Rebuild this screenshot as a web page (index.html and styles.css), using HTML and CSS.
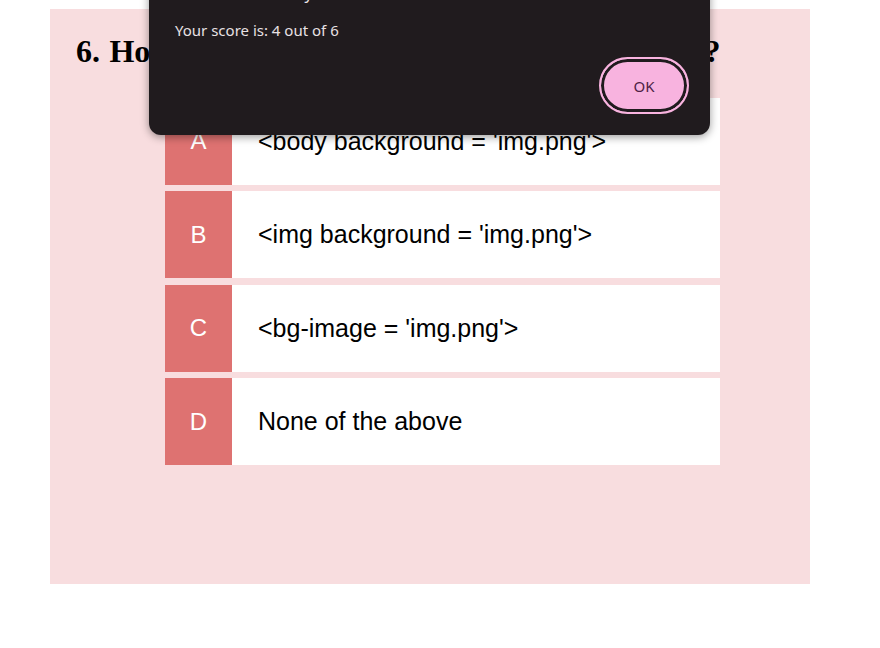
FILE: index.html
```html
<!DOCTYPE html>
<html>
<head>
<meta charset="utf-8">
<link rel="stylesheet" href="styles.css">
</head>
<body>
<div class="quiz">
  <h1 class="question">6. How to add a background image in HTML?</h1>
  <div class="options">
    <div class="option"><span class="letter">A</span><span class="text">&lt;body background = 'img.png'&gt;</span></div>
    <div class="option"><span class="letter">B</span><span class="text">&lt;img background = 'img.png'&gt;</span></div>
    <div class="option"><span class="letter">C</span><span class="text">&lt;bg-image = 'img.png'&gt;</span></div>
    <div class="option"><span class="letter">D</span><span class="text">None of the above</span></div>
  </div>
</div>
<div class="dialog">
  <div class="dialog-title">127.0.0.1:5500 says</div>
  <div class="dialog-msg">Your score is: 4 out of 6</div>
  <div class="dialog-actions"><button class="ok">OK</button></div>
</div>
</body>
</html>
```
FILE: styles.css
```css
html, body {
  margin: 0;
  padding: 0;
  background: #ffffff;
}
body {
  position: relative;
  width: 880px;
  height: 648px;
  overflow: hidden;
}
.quiz {
  margin: 9px 0 0 50px;
  width: 760px;
  height: 575px;
  background: #f8dddf;
  padding-top: 24px;
  box-sizing: border-box;
}
.question {
  margin: 0 0 0 26px;
  font-family: "Liberation Serif", "Times New Roman", serif;
  font-weight: bold;
  font-size: 32px;
  line-height: 36px;
  word-spacing: 1.4px;
  color: #000;
  white-space: nowrap;
}
.options {
  margin: 28.5px 0 0 115px;
  width: 555px;
  display: flex;
  flex-direction: column;
  gap: 6.5px;
}
.option {
  display: flex;
  height: 87px;
  background: #ffffff;
  align-items: stretch;
}
.letter {
  width: 67px;
  background: #de7271;
  color: #ffffff;
  display: flex;
  align-items: center;
  justify-content: center;
  font-family: "Liberation Sans", Arial, sans-serif;
  font-size: 24px;
}
.text {
  display: flex;
  align-items: center;
  padding-left: 26px;
  font-family: "Liberation Sans", Arial, sans-serif;
  font-size: 25px;
  color: #000;
}
.dialog {
  position: absolute;
  left: 149px;
  top: -40px;
  width: 561px;
  height: 175px;
  box-sizing: border-box;
  background: #201b1e;
  border-radius: 12px;
  box-shadow: 0 2px 8px rgba(0, 0, 0, 0.4);
  padding: 23px 21px 0 26px;
  font-family: "Noto Sans", "Open Sans", sans-serif;
  color: #e8e1e4;
}
.dialog-title {
  font-size: 16px;
  line-height: 20px;
}
.dialog-msg {
  margin-top: 17px;
  font-size: 15px;
  line-height: 20px;
}
.dialog-actions {
  margin-top: 17px;
  display: flex;
  justify-content: flex-end;
}
.ok {
  width: 90px;
  height: 57px;
  box-sizing: border-box;
  border: 2px solid #f8b3df;
  border-radius: 29px;
  background: #f8b3df;
  box-shadow: inset 0 0 0 3px #201b1e;
  color: #4e1f46;
  font-family: "Noto Sans", "Open Sans", sans-serif;
  font-size: 15px;
  padding: 0;
}
```
